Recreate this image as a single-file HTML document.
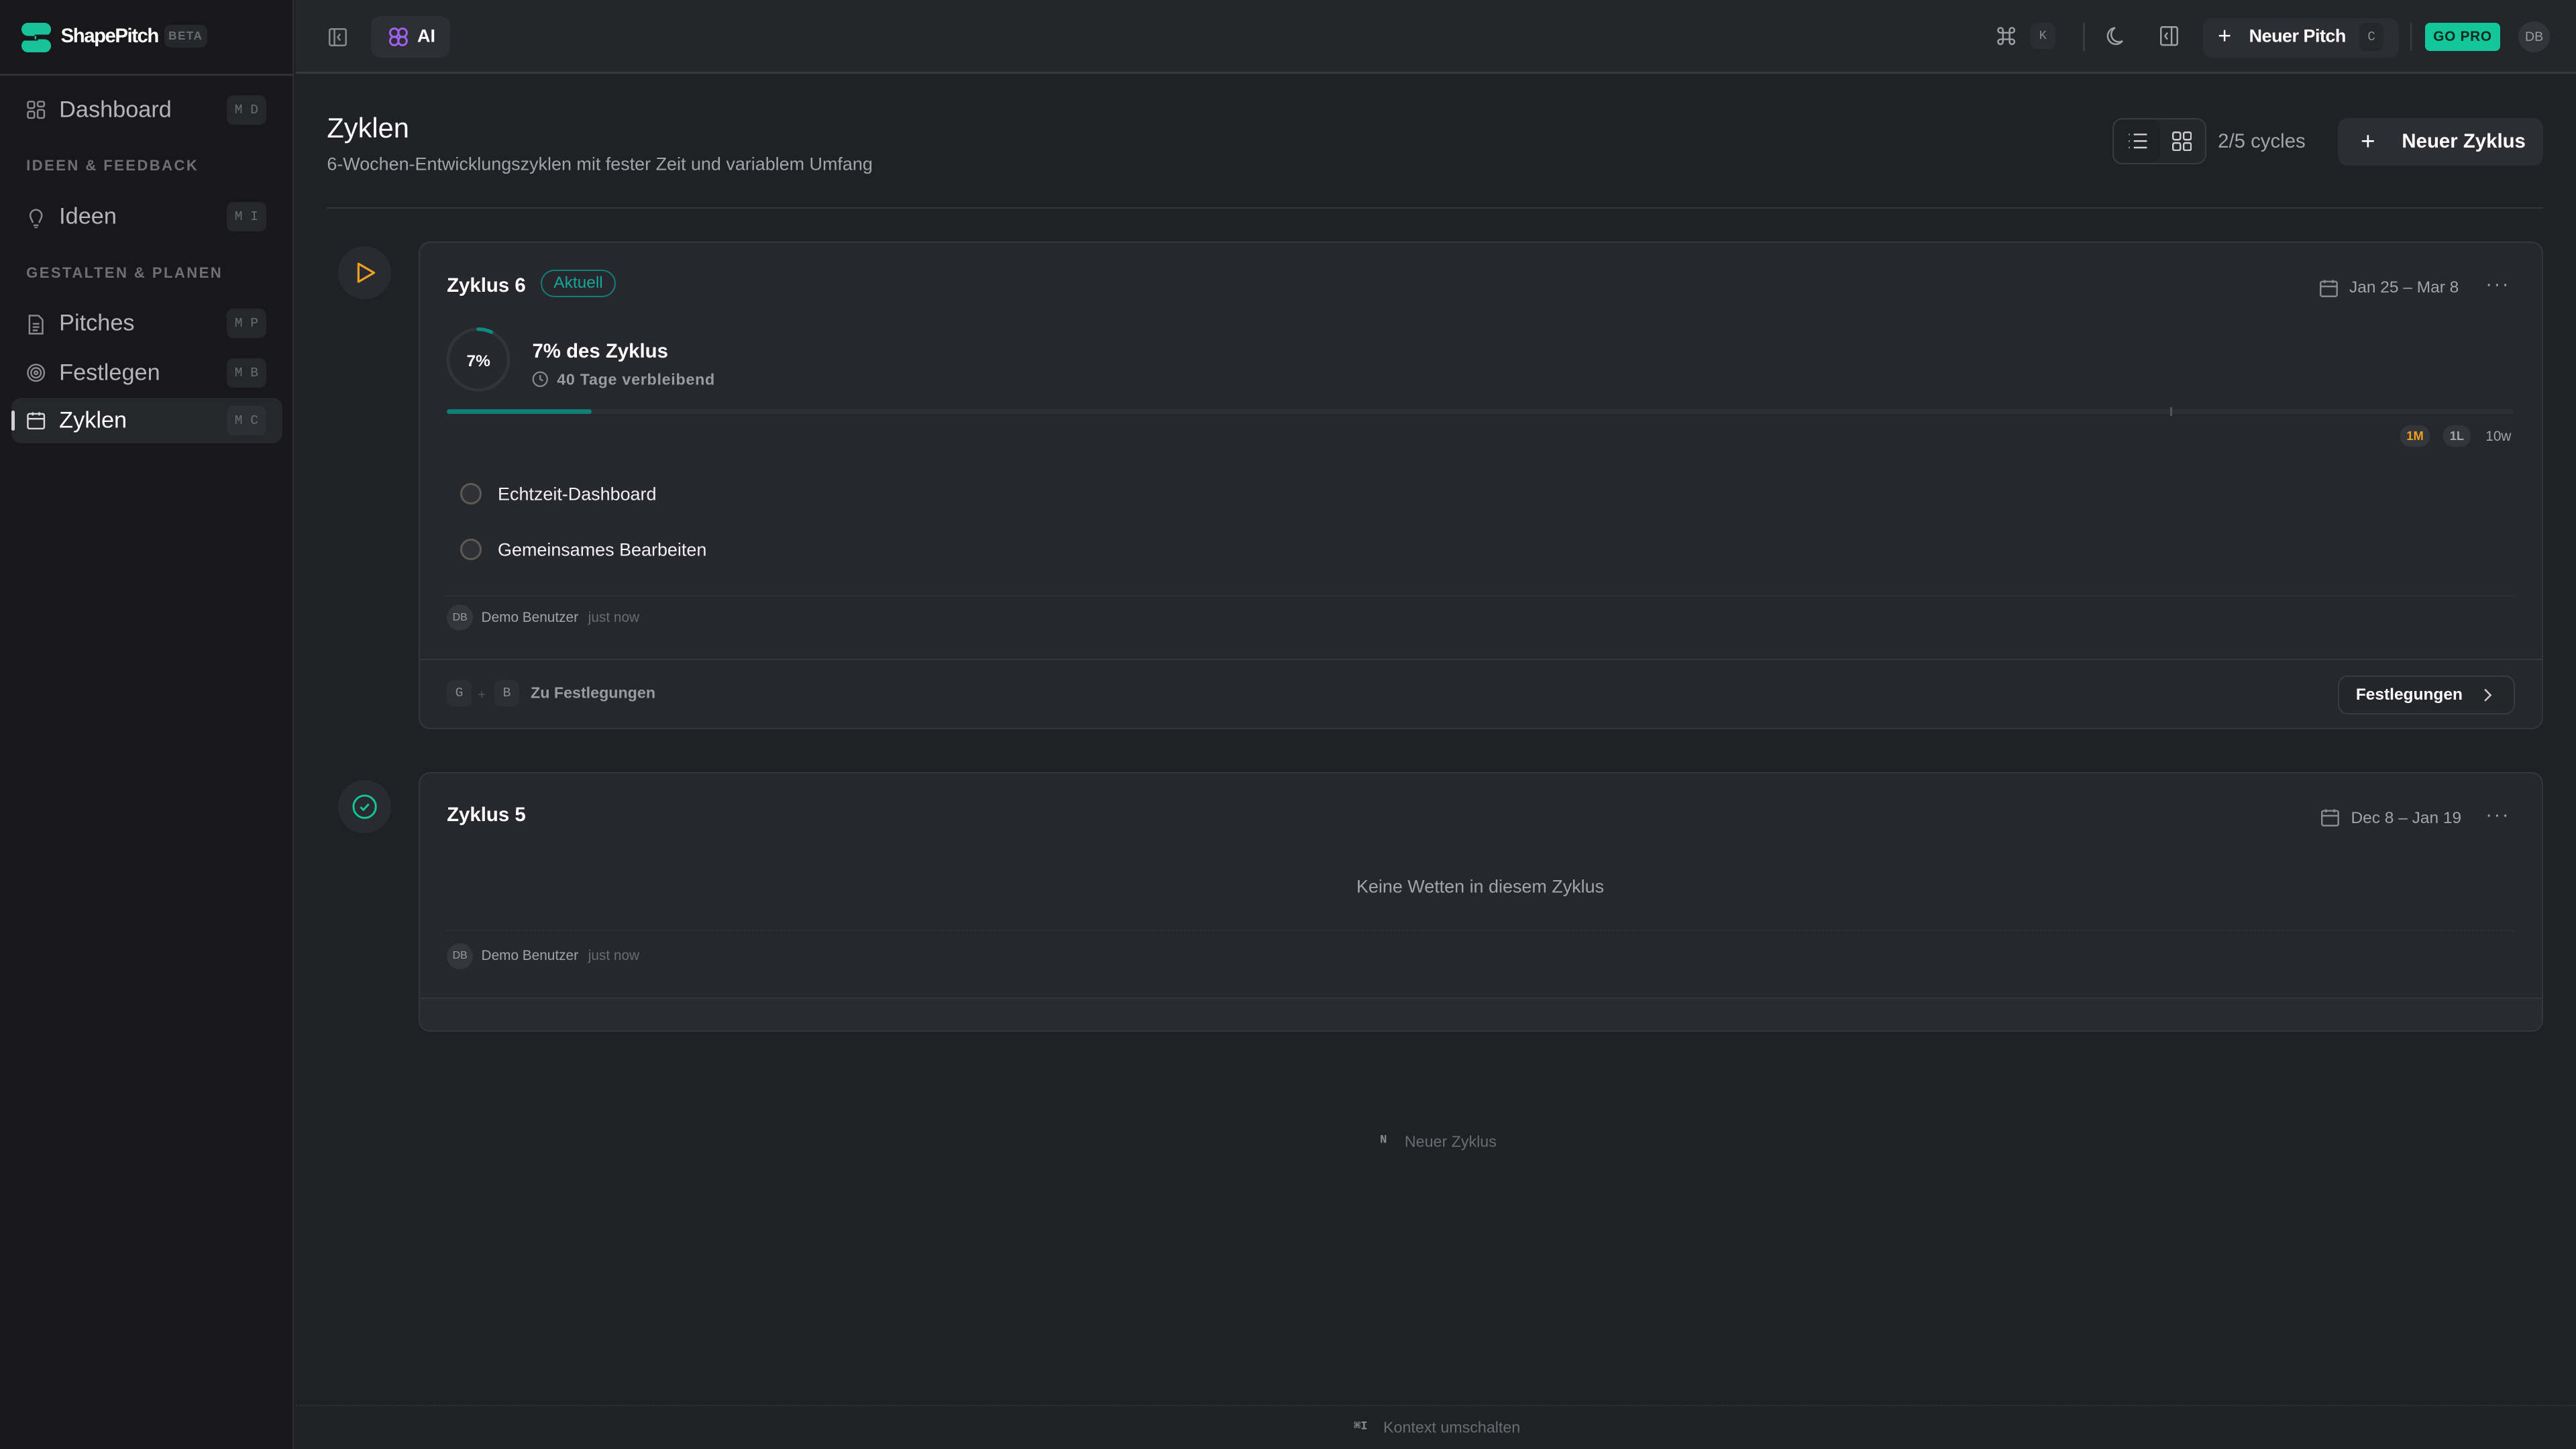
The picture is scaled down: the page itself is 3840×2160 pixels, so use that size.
<!DOCTYPE html>
<html><head><meta charset="utf-8"><style>
*{box-sizing:border-box;margin:0;padding:0}
html,body{width:3840px;height:2160px;overflow:hidden;background:#202125}
#r{position:absolute;left:0;top:0;width:1568px;height:882px;zoom:2.44898;font-family:"Liberation Sans",sans-serif;color:#e8e8ea;background:#202125}
.a{position:absolute;white-space:nowrap}
.kbd{position:absolute;background:#26272b;border-radius:4px;color:#6b6c72;font-family:"Liberation Mono",monospace;font-size:8px;display:flex;align-items:center;justify-content:center;letter-spacing:0;word-spacing:0}
.nav{position:absolute;left:36px;font-size:14px;color:#b4b4ba;transform:translateY(-50%)}
.sec{position:absolute;left:16px;font-size:9px;font-weight:bold;letter-spacing:1px;color:#6f7076;transform:translateY(-50%)}
.ic{position:absolute}
.mid{transform:translateY(-50%)}
svg{display:block}
</style></head><body><div id="r">
<!-- sidebar -->
<div class="a" style="left:0;top:0;width:179px;height:882px;background:#18181b;border-right:1px solid #2c2d31"></div>
<div class="a" style="left:0;top:45px;width:179px;height:1px;background:#2f3034"></div>
<svg class="ic" style="left:13px;top:14px" width="18" height="18" viewBox="0 0 18 18"><path d="M4 0h10a4 4 0 010 8H9v2h5a4 4 0 010 8H4a4 4 0 010-8h4V8H4a4 4 0 010-8z" fill="#19c39a"/><path d="M8 7.2h10v0.8H8zM0 10h10v0.8H0z" fill="#18181b"/></svg>
<div class="a mid" style="left:37px;top:22px;font-size:12px;font-weight:bold;letter-spacing:-0.6px;color:#fff">ShapePitch</div>
<div class="a" style="left:100px;top:15px;width:26px;height:14px;border-radius:4px;background:#26272b;color:#6b6c72;font-size:7px;font-weight:bold;letter-spacing:.6px;display:flex;align-items:center;justify-content:center">BETA</div>

<svg class="ic" style="left:16px;top:61px" width="12" height="12" viewBox="0 0 12 12" fill="none" stroke="#8a8b91" stroke-width="1"><rect x="1" y="1" width="4" height="4" rx="1"/><rect x="7" y="1" width="4" height="3" rx="1"/><rect x="1" y="7" width="4" height="4" rx="1"/><rect x="7" y="6" width="4" height="5" rx="1"/></svg>
<div class="nav" style="top:67px">Dashboard</div>
<div class="kbd" style="left:138px;top:58px;width:24px;height:18px">M&nbsp;D</div>
<div class="sec" style="top:101px">IDEEN &amp; FEEDBACK</div>
<svg class="ic" style="left:16px;top:126px" width="12" height="13" viewBox="0 0 12 13" fill="none" stroke="#8a8b91" stroke-width="1"><path d="M4 9.5C4 8 2.5 7 2.5 5a3.5 3.5 0 017 0c0 2-1.5 3-1.5 4.5M4.5 11h3M5 12.5h2"/></svg>
<div class="nav" style="top:132px">Ideen</div>
<div class="kbd" style="left:138px;top:123px;width:24px;height:18px">M&nbsp;I</div>
<div class="sec" style="top:166px">GESTALTEN &amp; PLANEN</div>
<svg class="ic" style="left:16px;top:191px" width="12" height="13" viewBox="0 0 12 13" fill="none" stroke="#8a8b91" stroke-width="1"><path d="M2 1h5.5L10 3.5V12H2z"/><path d="M4 6h4M4 8h4M4 10h3"/></svg>
<div class="nav" style="top:197px">Pitches</div>
<div class="kbd" style="left:138px;top:188px;width:24px;height:18px">M&nbsp;P</div>
<svg class="ic" style="left:16px;top:221px" width="12" height="12" viewBox="0 0 12 12" fill="none" stroke="#8a8b91" stroke-width="1"><circle cx="6" cy="6" r="5"/><circle cx="6" cy="6" r="3"/><circle cx="6" cy="6" r="1"/></svg>
<div class="nav" style="top:227px">Festlegen</div>
<div class="kbd" style="left:138px;top:218px;width:24px;height:18px">M&nbsp;B</div>
<div class="a" style="left:7px;top:242px;width:165px;height:28px;border-radius:6px;background:#26272b"></div>
<div class="a" style="left:7px;top:250px;width:2px;height:12px;background:#cfcfd4;border-radius:1px"></div>
<svg class="ic" style="left:16px;top:250px" width="12" height="12" viewBox="0 0 12 12" fill="none" stroke="#d8d8dc" stroke-width="1"><rect x="1" y="2" width="10" height="9" rx="1"/><path d="M1 5h10M4 1v2M8 1v2"/></svg>
<div class="nav" style="top:256px;color:#fff">Zyklen</div>
<div class="kbd" style="left:138px;top:247px;width:24px;height:18px;background:#2e2f34">M&nbsp;C</div>

<!-- top bar -->
<div class="a" style="left:180px;top:0;width:1388px;height:45px;background:#25262a;border-bottom:1.5px solid #38393d"></div>
<svg class="ic" style="left:200px;top:17px" width="11" height="11" viewBox="0 0 11 11" fill="none" stroke="#8a8b91" stroke-width="1"><rect x=".5" y=".5" width="10" height="10" rx="1"/><path d="M3.5 .5v10M7 3.5L5.5 5.5 7 7.5"/></svg>
<div class="a" style="left:226px;top:10px;width:48px;height:25px;border-radius:6px;background:#2e2f34"></div>
<svg class="ic" style="left:236px;top:16px" width="13" height="13" viewBox="0 0 13 13" fill="none" stroke="#a061f0" stroke-width="1.2"><circle cx="4" cy="4" r="2.6"/><circle cx="9" cy="4" r="2.6"/><circle cx="4" cy="9" r="2.6"/><circle cx="9" cy="9" r="2.6"/></svg>
<div class="a mid" style="left:254px;top:22px;font-size:11px;font-weight:bold;color:#fff">AI</div>

<svg class="ic" style="left:1215px;top:16px" width="12" height="12" viewBox="0 0 12 12" fill="none" stroke="#a0a1a7" stroke-width="1"><path d="M4 4h4v4H4zM4 4H2.5A1.5 1.5 0 114 2.5zM8 4V2.5A1.5 1.5 0 119.5 4zM8 8h1.5A1.5 1.5 0 118 9.5zM4 8v1.5A1.5 1.5 0 112.5 8z"/></svg>
<div class="kbd" style="left:1236px;top:14px;width:15px;height:16px;font-size:7.5px;color:#8a8b91;background:#2c2d32">K</div>
<div class="a" style="left:1268px;top:14px;width:1px;height:17px;background:#3a3b40"></div>
<svg class="ic" style="left:1281px;top:16px" width="12" height="13" viewBox="0 0 12 13" fill="none" stroke="#a0a1a7" stroke-width="1"><path d="M6.5 1A5 5 0 1011 9 4.5 4.5 0 016.5 1z"/></svg>
<svg class="ic" style="left:1315px;top:16px" width="11" height="12" viewBox="0 0 11 12" fill="none" stroke="#a0a1a7" stroke-width="1"><rect x=".5" y=".5" width="10" height="11" rx="1"/><path d="M7 .5v11M4.5 4L3 6l1.5 2"/></svg>
<div class="a" style="left:1341px;top:11px;width:119px;height:24px;border-radius:6px;background:#2d2e33"></div>
<div class="a mid" style="left:1350px;top:22px;font-size:14px;color:#fff;font-weight:300">+</div>
<div class="a mid" style="left:1369px;top:22px;font-size:11px;color:#fff;font-weight:bold;letter-spacing:-0.2px">Neuer Pitch</div>
<div class="kbd" style="left:1436px;top:14px;width:15px;height:17px;color:#8a8b91">C</div>
<div class="a" style="left:1467px;top:14px;width:1px;height:17px;background:#3a3b40"></div>
<div class="a" style="left:1476px;top:14px;width:46px;height:17px;border-radius:3px;background:#14c79b;color:#0b2a20;font-size:8.5px;font-weight:bold;display:flex;align-items:center;justify-content:center;letter-spacing:.3px">GO PRO</div>
<div class="a" style="left:1533px;top:13px;width:19px;height:19px;border-radius:50%;background:#34353a;color:#9a9ba1;font-size:8px;display:flex;align-items:center;justify-content:center">DB</div>

<!-- header -->
<div class="a mid" style="left:199px;top:78px;font-size:17px;color:#fff">Zyklen</div>
<div class="a mid" style="left:199px;top:100px;font-size:11px;color:#a3a4aa">6-Wochen-Entwicklungszyklen mit fester Zeit und variablem Umfang</div>
<div class="a" style="left:1286px;top:72px;width:57px;height:28px;border:1px solid #3a3b40;border-radius:6px;background:#25262a"></div>
<div class="a" style="left:1287px;top:73px;width:28px;height:26px;border-radius:5px;background:#202125"></div>
<svg class="ic" style="left:1295px;top:81px" width="12" height="10" viewBox="0 0 12 10" fill="none" stroke="#d0d0d4" stroke-width="1"><path d="M4 1h8M4 5h8M4 9h8M1 1h.5M1 5h.5M1 9h.5"/></svg>
<svg class="ic" style="left:1322px;top:80px" width="12" height="12" viewBox="0 0 12 12" fill="none" stroke="#d0d0d4" stroke-width="1"><rect x=".5" y=".5" width="4.5" height="4.5" rx="1"/><rect x="7" y=".5" width="4.5" height="4.5" rx="1"/><rect x=".5" y="7" width="4.5" height="4.5" rx="1"/><rect x="7" y="7" width="4.5" height="4.5" rx="1"/></svg>
<div class="a mid" style="left:1350px;top:86px;font-size:12px;color:#a3a4aa">2/5 cycles</div>
<div class="a" style="left:1423px;top:72px;width:125px;height:29px;border-radius:6px;background:#2d2e33"></div>
<div class="a mid" style="left:1437px;top:86px;font-size:15px;color:#fff;font-weight:300">+</div>
<div class="a mid" style="left:1462px;top:86px;font-size:12px;color:#fff;font-weight:bold">Neuer Zyklus</div>
<div class="a" style="left:199px;top:126px;width:1349px;height:1px;background:#35363b"></div>

<!-- card 1 -->
<div class="a" style="left:206px;top:150px;width:32px;height:32px;border-radius:50%;background:#2a2b30"></div>
<svg class="ic" style="left:215px;top:158px" width="15" height="16" viewBox="0 0 15 16" fill="none" stroke="#f0a020" stroke-width="1.3" stroke-linejoin="round"><path d="M3 2.5v11l9.5-5.5z"/></svg>
<div class="a" style="left:255px;top:147px;width:1293px;height:297px;border:1px solid #36373c;border-radius:7px;background:#27282d"></div>
<div class="a" style="left:256px;top:401px;width:1291px;height:1px;background:#36373c"></div>
<div class="a mid" style="left:272px;top:174px;font-size:12px;font-weight:bold;color:#fff">Zyklus 6</div>
<div class="a" style="left:329px;top:164px;width:46px;height:17px;border:1px solid #0f7f78;border-radius:9px;color:#13a89c;font-size:10px;display:flex;align-items:center;justify-content:center">Aktuell</div>
<svg class="ic" style="left:1412px;top:170px" width="11" height="11" viewBox="0 0 11 11" fill="none" stroke="#8a8b91" stroke-width="1"><rect x=".5" y="1.5" width="10" height="9" rx="1"/><path d="M.5 4.5h10M3 .5v2M8 .5v2"/></svg>
<div class="a mid" style="left:1430px;top:175px;font-size:10px;color:#a3a4aa">Jan 25 – Mar 8</div>
<div class="a mid" style="left:1513px;top:173px;font-size:12px;color:#a3a4aa;letter-spacing:1px">···</div>
<svg class="ic" style="left:271px;top:199px" width="40" height="40" viewBox="0 0 40 40" fill="none"><circle cx="20" cy="20" r="18.5" stroke="#333439" stroke-width="2"/><path d="M20 1.5A18.5 18.5 0 0 1 28 3.3" stroke="#0f8a80" stroke-width="2.2" stroke-linecap="round"/></svg>
<div class="a mid" style="left:284px;top:220px;font-size:10px;font-weight:bold;color:#fff">7%</div>
<div class="a mid" style="left:324px;top:214px;font-size:12px;font-weight:bold;color:#fff">7% des Zyklus</div>
<svg class="ic" style="left:324px;top:226px" width="10" height="10" viewBox="0 0 10 10" fill="none" stroke="#8a8b91" stroke-width=".9"><circle cx="5" cy="5" r="4.3"/><path d="M5 2.5V5l1.7 1"/></svg>
<div class="a mid" style="left:339px;top:231px;font-size:9.5px;font-weight:bold;color:#9a9ba1;letter-spacing:.3px">40 Tage verbleibend</div>
<div class="a" style="left:272px;top:249px;width:1258px;height:3px;background:#2e2f34;border-radius:2px"></div>
<div class="a" style="left:272px;top:249px;width:88px;height:3px;background:#0f7f78;border-radius:2px"></div>
<div class="a" style="left:1321px;top:248px;width:1px;height:5px;background:#55565c"></div>
<div class="a" style="left:1461px;top:259px;width:18px;height:13px;border-radius:6px;background:#35363b;color:#f0a020;font-size:7.5px;font-weight:bold;display:flex;align-items:center;justify-content:center">1M</div>
<div class="a" style="left:1487px;top:259px;width:17px;height:13px;border-radius:6px;background:#34353a;color:#a3a4aa;font-size:7.5px;font-weight:bold;display:flex;align-items:center;justify-content:center">1L</div>
<div class="a mid" style="left:1513px;top:266px;font-size:8.5px;color:#a3a4aa">10w</div>
<div class="a" style="left:280px;top:294px;width:13px;height:13px;border-radius:50%;border:1.5px solid #5c5a52;background:#303136"></div>
<div class="a mid" style="left:303px;top:301px;font-size:11px;color:#f0f0f2">Echtzeit-Dashboard</div>
<div class="a" style="left:280px;top:328px;width:13px;height:13px;border-radius:50%;border:1.5px solid #5c5a52;background:#303136"></div>
<div class="a mid" style="left:303px;top:335px;font-size:11px;color:#f0f0f2">Gemeinsames Bearbeiten</div>
<div class="a" style="left:272px;top:362px;width:1258px;height:0;border-top:1px dotted #34353a"></div>
<div class="a" style="left:272px;top:368px;width:16px;height:16px;border-radius:50%;background:#35363b;color:#9a9ba1;font-size:6.5px;display:flex;align-items:center;justify-content:center">DB</div>
<div class="a mid" style="left:293px;top:376px;font-size:8.5px;color:#a3a4aa">Demo Benutzer</div>
<div class="a mid" style="left:358px;top:376px;font-size:8.5px;color:#6b6c72">just now</div>
<div class="kbd" style="left:272px;top:414px;width:15px;height:16px;color:#8a8b91;background:#2e2f34">G</div>
<div class="a mid" style="left:291px;top:423px;font-size:8px;color:#55565c">+</div>
<div class="kbd" style="left:301px;top:414px;width:15px;height:16px;color:#8a8b91;background:#2e2f34">B</div>
<div class="a mid" style="left:323px;top:422px;font-size:9.5px;font-weight:bold;color:#9a9ba1">Zu Festlegungen</div>
<div class="a" style="left:1423px;top:411px;width:108px;height:24px;border:1px solid #3a3b40;border-radius:6px;background:#25262a"></div>
<div class="a mid" style="left:1434px;top:423px;font-size:10px;font-weight:bold;color:#fff">Festlegungen</div>
<svg class="ic" style="left:1510px;top:418px" width="8" height="10" viewBox="0 0 8 10" fill="none" stroke="#d0d0d4" stroke-width="1"><path d="M2.5 1.5L6 5 2.5 8.5"/></svg>

<!-- card 2 -->
<div class="a" style="left:206px;top:475px;width:32px;height:32px;border-radius:50%;background:#2a2b30"></div>
<svg class="ic" style="left:214px;top:483px" width="16" height="16" viewBox="0 0 16 16" fill="none" stroke="#14c79b" stroke-width="1.2"><circle cx="8" cy="8" r="6.8"/><path d="M5.5 8.2l1.7 1.7 3.3-3.5"/></svg>
<div class="a" style="left:255px;top:470px;width:1293px;height:158px;border:1px solid #36373c;border-radius:7px;background:#27282d"></div>
<div class="a" style="left:256px;top:607px;width:1291px;height:20px;background:#2a2b30;border-top:1px solid #36373c;border-radius:0 0 6px 6px"></div>
<div class="a mid" style="left:272px;top:496px;font-size:12px;font-weight:bold;color:#fff">Zyklus 5</div>
<svg class="ic" style="left:1413px;top:492px" width="11" height="11" viewBox="0 0 11 11" fill="none" stroke="#8a8b91" stroke-width="1"><rect x=".5" y="1.5" width="10" height="9" rx="1"/><path d="M.5 4.5h10M3 .5v2M8 .5v2"/></svg>
<div class="a mid" style="left:1431px;top:498px;font-size:10px;color:#a3a4aa">Dec 8 – Jan 19</div>
<div class="a mid" style="left:1513px;top:496px;font-size:12px;color:#a3a4aa;letter-spacing:1px">···</div>
<div class="a mid" style="left:901px;top:540px;font-size:11px;color:#a3a4aa;transform:translate(-50%,-50%)">Keine Wetten in diesem Zyklus</div>
<div class="a" style="left:272px;top:566px;width:1258px;height:0;border-top:1px dotted #34353a"></div>
<div class="a" style="left:272px;top:574px;width:16px;height:16px;border-radius:50%;background:#35363b;color:#9a9ba1;font-size:6.5px;display:flex;align-items:center;justify-content:center">DB</div>
<div class="a mid" style="left:293px;top:582px;font-size:8.5px;color:#a3a4aa">Demo Benutzer</div>
<div class="a mid" style="left:358px;top:582px;font-size:8.5px;color:#6b6c72">just now</div>

<!-- bottom -->
<div class="a mid" style="left:840px;top:694px;font-size:7px;font-family:'Liberation Mono',monospace;color:#8a8b91;font-weight:bold">N</div>
<div class="a mid" style="left:855px;top:695px;font-size:9.5px;color:#6b6c72">Neuer Zyklus</div>
<div class="a" style="left:180px;top:855px;width:1388px;height:0;border-top:1px dotted #34353a"></div>
<div class="a mid" style="left:824px;top:868px;font-size:7px;font-family:'Liberation Mono',monospace;color:#8a8b91;font-weight:bold">⌘I</div>
<div class="a mid" style="left:842px;top:869px;font-size:9.5px;color:#6b6c72">Kontext umschalten</div>
</div></body></html>
